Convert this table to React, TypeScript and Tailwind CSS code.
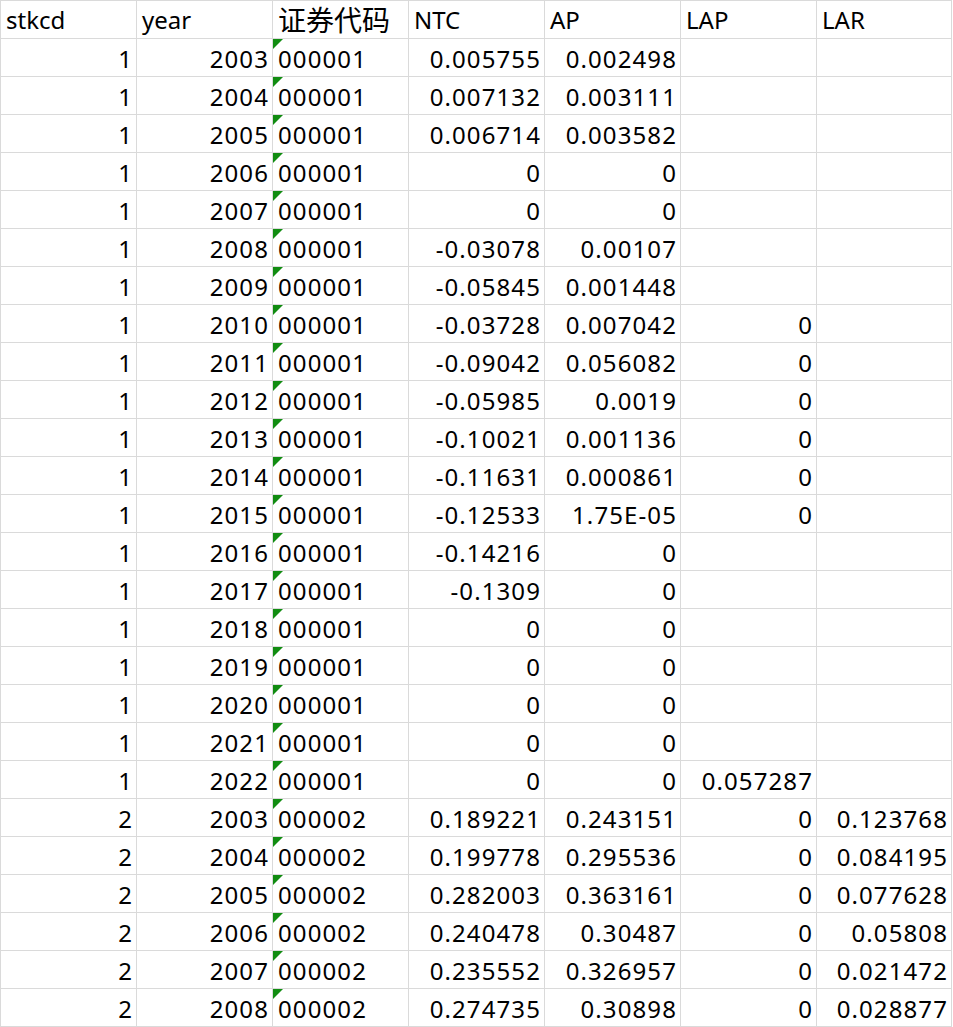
import React from "react";

type Row = [string, string, string, string, string, string, string];

const rows: Row[] = [
  ["1", "2003", "000001", "0.005755", "0.002498", "", ""],
  ["1", "2004", "000001", "0.007132", "0.003111", "", ""],
  ["1", "2005", "000001", "0.006714", "0.003582", "", ""],
  ["1", "2006", "000001", "0", "0", "", ""],
  ["1", "2007", "000001", "0", "0", "", ""],
  ["1", "2008", "000001", "-0.03078", "0.00107", "", ""],
  ["1", "2009", "000001", "-0.05845", "0.001448", "", ""],
  ["1", "2010", "000001", "-0.03728", "0.007042", "0", ""],
  ["1", "2011", "000001", "-0.09042", "0.056082", "0", ""],
  ["1", "2012", "000001", "-0.05985", "0.0019", "0", ""],
  ["1", "2013", "000001", "-0.10021", "0.001136", "0", ""],
  ["1", "2014", "000001", "-0.11631", "0.000861", "0", ""],
  ["1", "2015", "000001", "-0.12533", "1.75E-05", "0", ""],
  ["1", "2016", "000001", "-0.14216", "0", "", ""],
  ["1", "2017", "000001", "-0.1309", "0", "", ""],
  ["1", "2018", "000001", "0", "0", "", ""],
  ["1", "2019", "000001", "0", "0", "", ""],
  ["1", "2020", "000001", "0", "0", "", ""],
  ["1", "2021", "000001", "0", "0", "", ""],
  ["1", "2022", "000001", "0", "0", "0.057287", ""],
  ["2", "2003", "000002", "0.189221", "0.243151", "0", "0.123768"],
  ["2", "2004", "000002", "0.199778", "0.295536", "0", "0.084195"],
  ["2", "2005", "000002", "0.282003", "0.363161", "0", "0.077628"],
  ["2", "2006", "000002", "0.240478", "0.30487", "0", "0.05808"],
  ["2", "2007", "000002", "0.235552", "0.326957", "0", "0.021472"],
  ["2", "2008", "000002", "0.274735", "0.30898", "0", "0.028877"],
];

const base =
  "relative h-[38px] border-r border-b border-[#dadada] whitespace-nowrap text-[24px] leading-[37px] text-black";
const numCell = `${base} pt-[1px] tracking-[1.1px] pr-[3px] text-right`;

export default function App() {
  const headers = ["stkcd", "year", "证券代码", "NTC", "AP", "LAP", "LAR"];
  return (
    <div
      className="w-[953px] h-[1027px] bg-white overflow-hidden"
      style={{ fontFamily: '"Noto Sans", "Noto Sans CJK SC", sans-serif' }}
    >
      <div className="w-[952px] border-t border-l border-[#dadada] grid grid-cols-[136px_136px_136px_136px_136px_136px_135px]">
        {headers.map((h, i) =>
          i === 2 ? (
            <div
              key={h}
              className="relative h-[38px] border-r border-b border-[#dadada] whitespace-nowrap text-[28px] leading-[37px] pl-[5px] text-black"
              style={{ fontFamily: '"Noto Sans CJK SC", sans-serif' }}
            >
              {h}
            </div>
          ) : (
            <div key={h} className={`${base} pt-[0px] pl-[5px] text-left`}>
              {h}
            </div>
          )
        )}
        {rows.map((r, ri) =>
          r.map((v, ci) =>
            ci === 2 ? (
              <div
                key={`${ri}-${ci}`}
                className={`${base} pt-[1px] tracking-[1.1px] pl-[5px] text-left`}
              >
                <div className="absolute left-0 top-0 w-[10px] h-[10px] bg-[#118c11] [clip-path:polygon(0_0,100%_0,0_100%)]" />
                <span className="relative">{v}</span>
              </div>
            ) : (
              <div key={`${ri}-${ci}`} className={numCell}>
                {v}
              </div>
            )
          )
        )}
      </div>
    </div>
  );
}
